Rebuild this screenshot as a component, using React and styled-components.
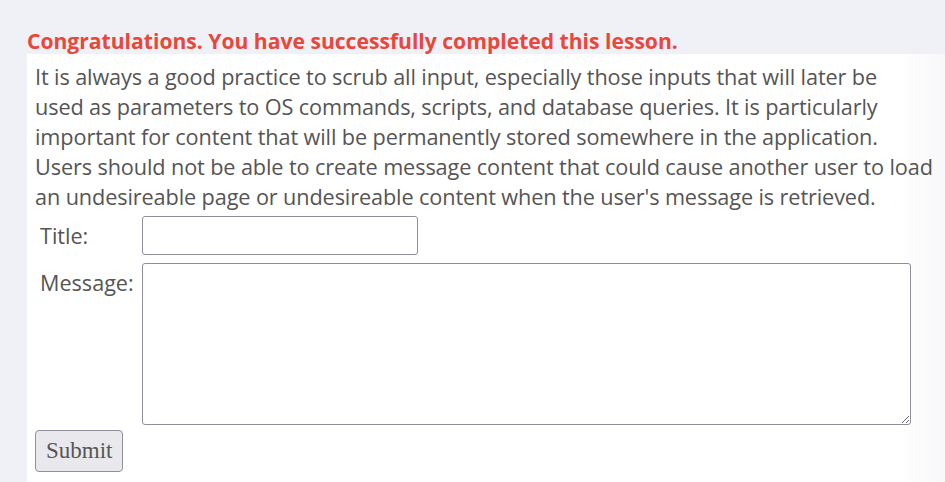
import React from "react";
import styled, { createGlobalStyle } from "styled-components";

const GlobalStyle = createGlobalStyle`
    body {
        margin: 0;
        background-color: #f0f1f6;
        overflow: hidden;
    }
`;

const Page = styled.div`
    padding: 28px 0 0 27px;
    font-family: "Open Sans", "Noto Sans", sans-serif;
`;

const Success = styled.h2`
    margin: 0;
    font-size: 21.1px;
    font-weight: 700;
    line-height: 26px;
    color: #e8473b;
`;

const Panel = styled.div`
    background: linear-gradient(to right, #ffffff 92%, #f3f3f6 100%);
    width: 940px;
    padding: 8px 0 10px 8px;
    color: #555;
`;

const Text = styled.p`
    margin: 0;
    font-size: 21.7px;
    letter-spacing: -0.12px;
    line-height: 30px;
`;

const FormTable = styled.table`
    border-spacing: 0;
    margin-top: 4px;
`;

const Label = styled.td`
    font-size: 21.6px;
    padding: 5px 8px 0 5px;
    vertical-align: top;
`;

const Cell = styled.td`
    padding: 0 0 8px 0;
`;

const TitleInput = styled.input`
    width: 276px;
    height: 39px;
    box-sizing: border-box;
    border: 1px solid #8f8f9d;
    border-radius: 3px;
`;

const MessageArea = styled.textarea`
    width: 769px;
    height: 162px;
    box-sizing: border-box;
    border: 1px solid #8f8f9d;
    border-radius: 3px;
    display: block;
`;

const Submit = styled.button`
    font-family: "Liberation Serif", serif;
    font-size: 23px;
    color: #555;
    background-color: #e9e9ed;
    border: 1px solid #8f8f9d;
    border-radius: 4px;
    padding: 7px 10px;
    margin-top: -3px;
`;

const App = () => {
    return (
        <Page>
            <GlobalStyle />
            <Success>Congratulations. You have successfully completed this lesson.</Success>
            <Panel>
                <Text>
                    It is always a good practice to scrub all input, especially those inputs that will later be
                    <br />
                    used as parameters to OS commands, scripts, and database queries. It is particularly
                    <br />
                    important for content that will be permanently stored somewhere in the application.
                    <br />
                    Users should not be able to create message content that could cause another user to load
                    <br />
                    an undesireable page or undesireable content when the user's message is retrieved.
                </Text>
                <FormTable>
                    <tbody>
                        <tr>
                            <Label>Title:</Label>
                            <Cell>
                                <TitleInput type="text" />
                            </Cell>
                        </tr>
                        <tr>
                            <Label>Message:</Label>
                            <Cell>
                                <MessageArea />
                            </Cell>
                        </tr>
                    </tbody>
                </FormTable>
                <Submit>Submit</Submit>
            </Panel>
        </Page>
    );
};

export default App;
